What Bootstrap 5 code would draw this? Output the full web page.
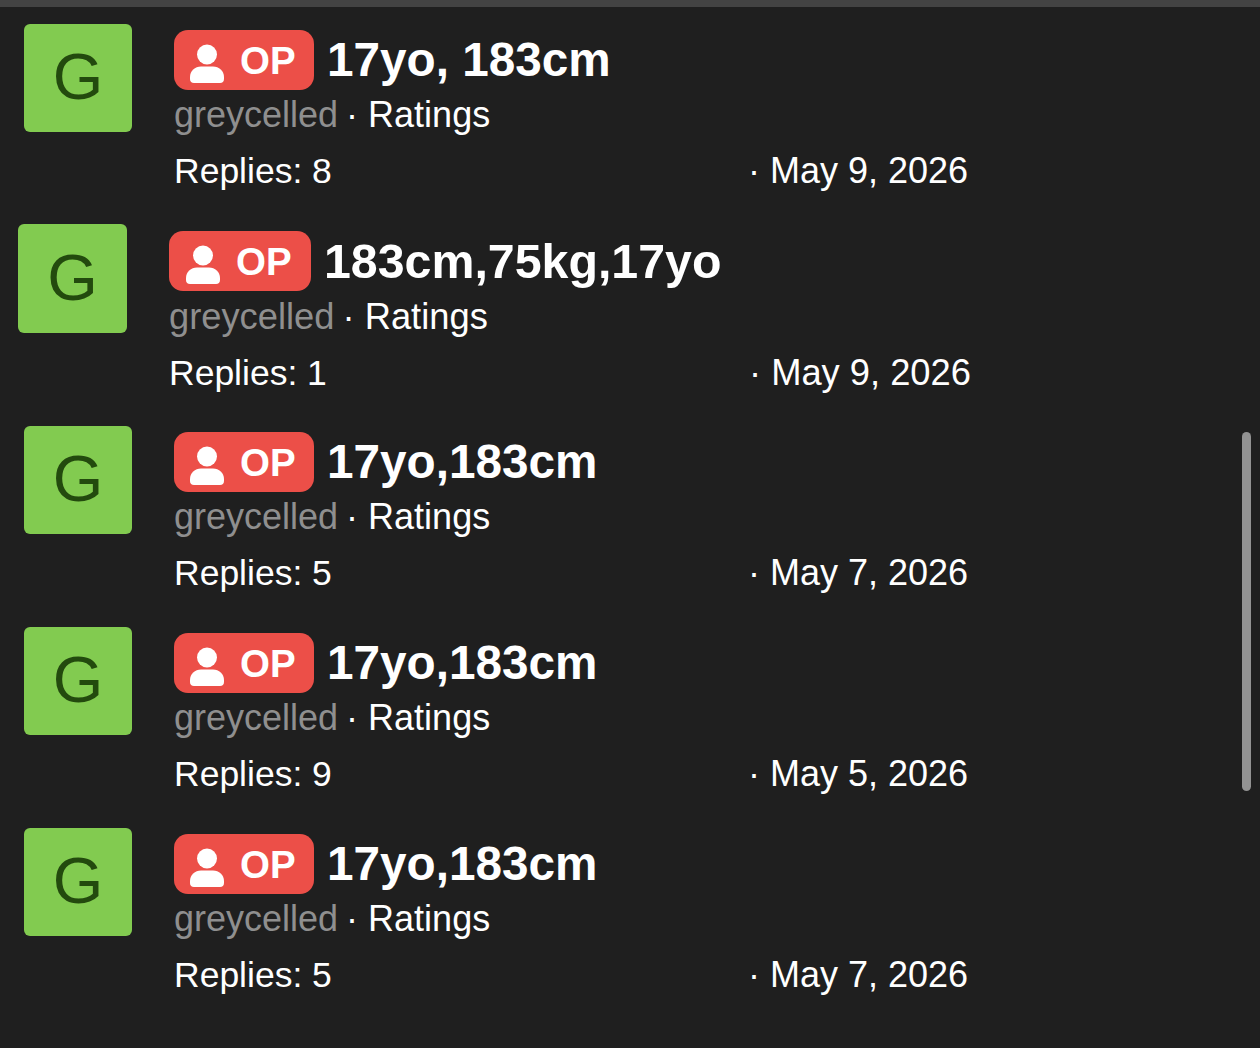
<!DOCTYPE html>
<html lang="en">
  <head>
    <meta charset="UTF-8" />
    <meta name="viewport" content="width=device-width, initial-scale=1.0" />
    <title>Threads</title>
    <link
      href="https://cdn.jsdelivr.net/npm/bootstrap@5.3.0/dist/css/bootstrap.min.css"
      rel="stylesheet"
    />
    <style>
      html,
      body {
        height: 100%;
        overflow: hidden;
      }
      body {
        background-color: #1f1f1f;
        font-family: "Liberation Sans", Arial, sans-serif;
        color: #fff;
      }
      .top-strip {
        height: 7px;
        background-color: #434343;
      }
      .thread-list {
        padding: 17px 0 0 24px;
      }
      .thread-row {
        height: 201px;
      }
      .thread-avatar {
        width: 108px;
        height: 108px;
        flex-shrink: 0;
        margin-right: 42px;
        padding-bottom: 3px;
        border-radius: 6px;
        background-color: #82cb50;
        color: #234a0e;
        font-size: 65px;
        line-height: 1;
      }
      .thread-body {
        padding-top: 6px;
      }
      .op-tag {
        width: 140px;
        height: 60px;
        padding: 2px 0 0 16px;
        border-radius: 14px;
        background-color: #ec4f48;
        font-size: 38.5px;
        font-weight: 700;
        margin-right: 13px;
      }
      .op-tag svg {
        width: 34px;
        height: 39px;
        margin: 5px 16px 0 0;
      }
      .thread-title {
        margin-top: -1px;
        font-size: 47.7px;
        font-weight: 700;
        line-height: 60px;
        white-space: nowrap;
      }
      .thread-meta {
        font-size: 36px;
        line-height: 48px;
        white-space: nowrap;
      }
      .thread-sub {
        margin-top: 1px;
      }
      .thread-author {
        color: #8f8f8f;
        margin-right: -2px;
      }
      .thread-foot {
        width: 900px;
        margin-top: 8px;
      }
      .thread-replies {
        width: 574px;
        font-size: 35.5px;
      }
      /* second row sits a bit off in the screenshot */
      .row-nudged {
        margin-left: -6px;
        margin-top: -1px;
        height: 202px;
      }
      .row-nudged .thread-avatar {
        width: 109px;
        height: 109px;
        margin-right: 42px;
      }
      .row-nudged .thread-body {
        padding-top: 7px;
      }
      .row-nudged .op-tag {
        width: 142px;
        padding-left: 17px;
      }
      .row-nudged .thread-title {
        font-size: 48.3px;
      }
      .row-nudged .thread-sub {
        margin-top: 2px;
      }
      .row-nudged .thread-meta {
        font-size: 36.3px;
      }
      .row-nudged .thread-replies {
        width: 580px;
        font-size: 35.5px;
      }
      .scroll-thumb {
        position: fixed;
        left: 1242px;
        top: 432px;
        width: 9px;
        height: 359px;
        border-radius: 5px;
        background-color: #929292;
      }
    </style>
  </head>
  <body>
    <div class="top-strip"></div>
    <div class="thread-list" id="threadList"></div>
    <div class="scroll-thumb"></div>

    <script src="https://cdn.jsdelivr.net/npm/bootstrap@5.3.0/dist/js/bootstrap.bundle.min.js"></script>
    <script>
      const threads = [
        { title: "17yo, 183cm", replies: 8, date: "May 9, 2026" },
        { title: "183cm,75kg,17yo", replies: 1, date: "May 9, 2026", nudged: true },
        { title: "17yo,183cm", replies: 5, date: "May 7, 2026" },
        { title: "17yo,183cm", replies: 9, date: "May 5, 2026" },
        { title: "17yo,183cm", replies: 5, date: "May 7, 2026" },
      ];

      const personIcon = `
        <svg viewBox="0 0 34 39" fill="#fff" aria-hidden="true">
          <circle cx="17" cy="10.5" r="10" />
          <path d="M0 33c0-6 5-10.500 11-10.500h12c6 0 11 4.500 11 10.500v2c0 2.500-1.500 4-4 4H4c-2.500 0-4-1.500-4-4z" />
        </svg>`;

      document.getElementById("threadList").innerHTML = threads
        .map(
          (t) => `
          <div class="thread-row d-flex ${t.nudged ? "row-nudged" : ""}">
            <div class="thread-avatar d-flex align-items-center justify-content-center">G</div>
            <div class="thread-body">
              <div class="d-flex align-items-center">
                <span class="op-tag d-flex align-items-center">${personIcon}OP</span>
                <span class="thread-title">${t.title}</span>
              </div>
              <div class="thread-meta thread-sub"><span class="thread-author">greycelled</span> · Ratings</div>
              <div class="thread-meta thread-foot d-flex align-items-baseline">
                <span class="thread-replies">Replies: ${t.replies}</span>
                <span>· ${t.date}</span>
              </div>
            </div>
          </div>`
        )
        .join("");
    </script>
  </body>
</html>
